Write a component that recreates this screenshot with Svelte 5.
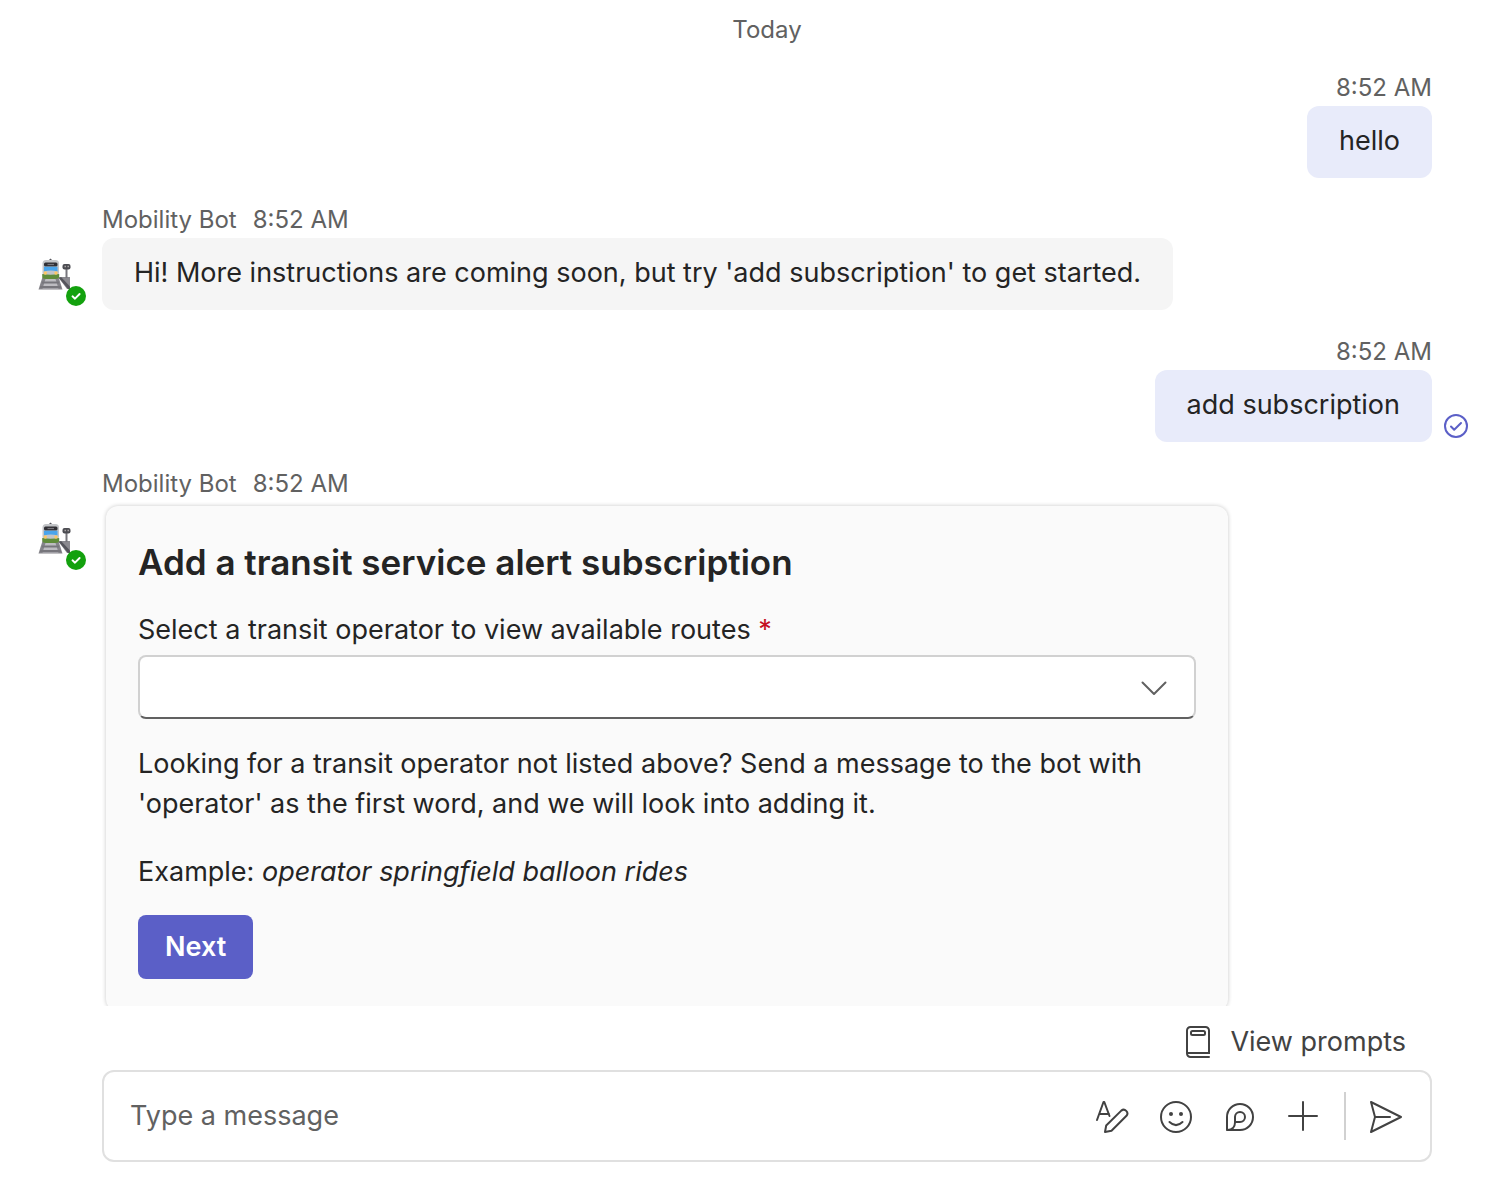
<script lang="ts">
  interface Message {
    id: number;
    own: boolean;
    time: string;
    text?: string;
    seen?: boolean;
  }

  const botName = 'Mobility Bot';

  const messages: Message[] = [
    { id: 1, own: true, time: '8:52 AM', text: 'hello' },
    {
      id: 2,
      own: false,
      time: '8:52 AM',
      text: "Hi! More instructions are coming soon, but try 'add subscription' to get started."
    },
    { id: 3, own: true, time: '8:52 AM', text: 'add subscription', seen: true },
    { id: 4, own: false, time: '8:52 AM' }
  ];

  let operator = $state('');
  let draft = $state('');
</script>

{#snippet avatar()}
  <svg class="avatar" viewBox="0 0 48 48" role="img" aria-label="{botName}, available">
    <path d="M20 19h12v12h-3z" fill="#8b8a90" />
    <path d="M21 20l9 11h2v-2.500l-9-9.500z" fill="#55555c" />
    <path d="M4.500 19h16l4 12.500H.5z" fill="#85848a" />
    <path d="M7.500 21h10l3 9.500h-16z" fill="#bdbcc1" />
    <path d="M4 24.500h17M2 29h21" stroke="#77767c" stroke-width="1.800" />
    <path d="M27.500 11h2v9h-2z" fill="#77767c" />
    <rect x="24.500" y="6" width="8" height="5.500" rx="2" fill="#4c4c52" />
    <path d="M26.500 8.500h1.500M29.500 8.500h1.500" stroke="#a9a5a5" stroke-width="1.500" />
    <path d="M10.500 2.500L12.500.500l2 2z" fill="#55555c" />
    <rect x="4.500" y="2" width="16.500" height="16" rx="3.500" fill="#c3c5c8" />
    <rect x="6" y="4.500" width="13.500" height="4" rx="1.500" fill="#303035" />
    <path d="M9.500 6.500h6.500" stroke="#77767c" stroke-width="1.200" />
    <path d="M6 8.800h13.500v4.700q-6.700-2-13.500 0z" fill="#4aa5ec" />
    <path d="M4.200 16q8.500 1.500 17 0v2.500q0 2.500-4 2.500H8.200q-4 0-4-2.500z" fill="#5f8c3a" />
    <circle cx="7.300" cy="15" r="1.700" fill="#fbc866" />
    <circle cx="18" cy="15" r="1.700" fill="#fbc866" />
    <circle cx="38" cy="38" r="10" fill="#13a10e" />
    <path d="M34.500 38.300l2.500 2.400 4.600-4.700" fill="none" stroke="#fff" stroke-width="1.900" stroke-linecap="round" stroke-linejoin="round" />
  </svg>
{/snippet}

<main class="chat">
  <section class="log" aria-label="Messages">
    <div class="day">Today</div>

    {#each messages as message (message.id)}
      <article class="message" class:own={message.own}>
        {#if !message.own}
          {@render avatar()}
        {/if}
        <div class="body">
          <header class="meta">
            {#if !message.own}<span>{botName}</span>{/if}
            <time>{message.time}</time>
          </header>
          {#if message.text}
            <p class="bubble">{message.text}</p>
          {:else}
            <form class="card" onsubmit={(e) => e.preventDefault()}>
              <h2>Add a transit service alert subscription</h2>
              <label for="operator">
                Select a transit operator to view available routes <span class="required">*</span>
              </label>
              <div class="select-wrap">
                <select id="operator" bind:value={operator} required>
                  <option value=""></option>
                </select>
                <svg class="chevron" viewBox="0 0 28 16" aria-hidden="true">
                  <path d="M2.500 2.500L14 14 25.500 2.500" fill="none" stroke="#616161" stroke-width="2" stroke-linecap="round" stroke-linejoin="round" />
                </svg>
              </div>
              <p>
                Looking for a transit operator not listed above? Send a message to the bot with
                'operator' as the first word, and we will look into adding it.
              </p>
              <p class="example">Example: <em>operator springfield balloon rides</em></p>
              <button class="primary" type="submit">Next</button>
            </form>
          {/if}
        </div>
        {#if message.own}
          <div class="status">
            {#if message.seen}
              <svg viewBox="0 0 24 24" role="img" aria-label="Sent">
                <circle cx="12" cy="12" r="11" />
                <path d="M7 12.500l3.200 3.300L17 9" />
              </svg>
            {/if}
          </div>
        {/if}
      </article>
    {/each}
  </section>

  <footer class="footer">
    <button class="prompts" type="button">
      <svg viewBox="0 0 24 32" aria-hidden="true">
        <path d="M23 31H4.500A3.500 3.500 0 0 1 1 27.500v-23A3.500 3.500 0 0 1 4.500 1h15A3.500 3.500 0 0 1 23 4.500V27H1" />
        <rect x="5" y="5" width="14" height="4" rx="1.500" />
      </svg>
      View prompts
    </button>

    <div class="composer">
      <input type="text" placeholder="Type a message" aria-label="Type a message" bind:value={draft} />
      <button class="tool" type="button" aria-label="Format">
        <svg viewBox="0 0 34 34">
          <path d="M2 20L8.500 2h.8l5.200 14M4.500 14h9.500" />
          <path d="M10 32l1.200-6.500L26.300 10.600a3.700 3.700 0 0 1 5.200 5.200L16.500 30.700z" />
        </svg>
      </button>
      <button class="tool" type="button" aria-label="Emoji">
        <svg viewBox="0 0 34 34">
          <circle cx="17" cy="17" r="15" />
          <path d="M10.500 22q6.500 6.200 13 0" />
          <circle class="dot" cx="12" cy="14" r="2" />
          <circle class="dot" cx="22" cy="14" r="2" />
        </svg>
      </button>
      <button class="tool" type="button" aria-label="Loop components">
        <svg viewBox="0 0 34 34">
          <path d="M4 30V17a13 13 0 1 1 13 13z" />
          <path d="M4.500 30c4.500 0 7.500-3 7.500-7.500V17a5 5 0 1 1 5 5h-5" />
        </svg>
      </button>
      <button class="tool" type="button" aria-label="More options">
        <svg viewBox="0 0 34 34">
          <path d="M16 2v28M2 16h28" />
        </svg>
      </button>
      <span class="divider"></span>
      <button class="tool" type="button" aria-label="Send">
        <svg viewBox="0 0 34 34">
          <path d="M2 2l30 15L2 32l4-15zM6 17h15" />
        </svg>
      </button>
    </div>
  </footer>
</main>

<style>
  :global(body) {
    background: #fff;
  }

  .chat {
    display: flex;
    flex-direction: column;
    height: 100vh;
    color: #242424;
    font-family: Inter, 'Liberation Sans', sans-serif;
    font-size: 27px;
    line-height: 40px;
  }

  .chat * {
    box-sizing: border-box;
  }

  .log {
    flex: 1;
    min-height: 0;
    overflow: hidden;
    display: flex;
    flex-direction: column;
    gap: 26px;
    padding: 14px 0 0 38px;
  }

  .day {
    padding: 0 62px 0 64px;
    text-align: center;
    color: #616161;
    font-size: 24px;
    line-height: 32px;
  }

  .message {
    display: flex;
    flex-shrink: 0;
    gap: 16px;
    padding-right: 62px;
  }

  .message.own {
    justify-content: flex-end;
    gap: 12px;
    padding-right: 26px;
  }

  .avatar {
    flex: none;
    width: 48px;
    height: 48px;
    margin-top: 54px;
  }

  .body {
    display: flex;
    flex-direction: column;
    align-items: flex-start;
    flex: 1;
    min-width: 0;
  }

  .own .body {
    align-items: flex-end;
  }

  .meta {
    display: flex;
    gap: 16px;
    padding-bottom: 2px;
    color: #616161;
    font-size: 24px;
    line-height: 32px;
  }

  .bubble {
    max-width: 85%;
    margin: 0;
    padding: 15px 32px 17px;
    border-radius: 12px;
    background: #f5f5f5;
  }

  .own .bubble {
    background: #e8ebfa;
  }

  .status {
    display: flex;
    align-items: flex-end;
    width: 24px;
    padding-bottom: 4px;
  }

  .status svg {
    width: 24px;
    height: 24px;
    fill: none;
    stroke: #5b5fc7;
    stroke-width: 2;
    stroke-linecap: round;
    stroke-linejoin: round;
  }

  .card {
    width: calc(85% - 9px);
    margin: 4px;
    padding: 32px;
    border-radius: 12px;
    background: #fafafa;
    box-shadow: 0 0 4px rgba(0, 0, 0, 0.22);
  }

  .card h2 {
    margin: 0 0 24px;
    font-size: 35px;
    font-weight: 600;
    line-height: 48px;
  }

  .card label {
    display: block;
    margin-bottom: 5px;
  }

  .required {
    color: #c50f1f;
  }

  .select-wrap {
    position: relative;
    margin-bottom: 25px;
  }

  .card select {
    display: block;
    width: 100%;
    height: 64px;
    padding: 0 64px 0 20px;
    appearance: none;
    border: 2px solid #d1d1d1;
    border-bottom-color: #616161;
    border-radius: 8px;
    background: #fff;
    color: inherit;
    font: inherit;
  }

  .chevron {
    position: absolute;
    top: 25px;
    right: 28px;
    width: 28px;
    height: 16px;
    pointer-events: none;
  }

  .card p {
    margin: 0;
  }

  .card .example {
    margin: 28px 0 23px;
  }

  .primary {
    display: block;
    height: 64px;
    padding: 0 27px;
    border: none;
    border-radius: 8px;
    background: #5b5fc7;
    color: #fff;
    font: inherit;
    font-weight: 600;
    cursor: pointer;
  }

  .footer {
    display: flex;
    flex-direction: column;
    align-items: flex-end;
    padding: 16px 62px 34px 102px;
  }

  .prompts {
    display: flex;
    align-items: center;
    gap: 20px;
    height: 40px;
    margin: 0 26px 8px 0;
    padding: 0;
    border: none;
    background: none;
    color: #424242;
    font: inherit;
    cursor: pointer;
  }

  .prompts svg {
    width: 24px;
    height: 32px;
    fill: none;
    stroke: #424242;
    stroke-width: 2;
    stroke-linecap: round;
  }

  .composer {
    display: flex;
    align-items: center;
    width: 100%;
    height: 92px;
    padding: 0 12px 0 26px;
    border: 2px solid #e0e0e0;
    border-radius: 12px;
    background: #fff;
  }

  .composer input {
    flex: 1;
    min-width: 0;
    padding: 0;
    border: none;
    outline: none;
    background: none;
    color: inherit;
    font: inherit;
  }

  .composer input::placeholder {
    color: #616161;
    opacity: 1;
  }

  .tool {
    display: flex;
    align-items: center;
    justify-content: center;
    width: 64px;
    height: 64px;
    padding: 2px 0 0;
    border: none;
    background: none;
    cursor: pointer;
  }

  .tool svg {
    width: 34px;
    height: 34px;
    fill: none;
    stroke: #424242;
    stroke-width: 2;
    stroke-linecap: round;
    stroke-linejoin: round;
  }

  .tool .dot {
    fill: #424242;
    stroke: none;
  }

  .divider {
    width: 2px;
    height: 48px;
    margin: 0 8px;
    background: #d1d1d1;
  }
</style>
